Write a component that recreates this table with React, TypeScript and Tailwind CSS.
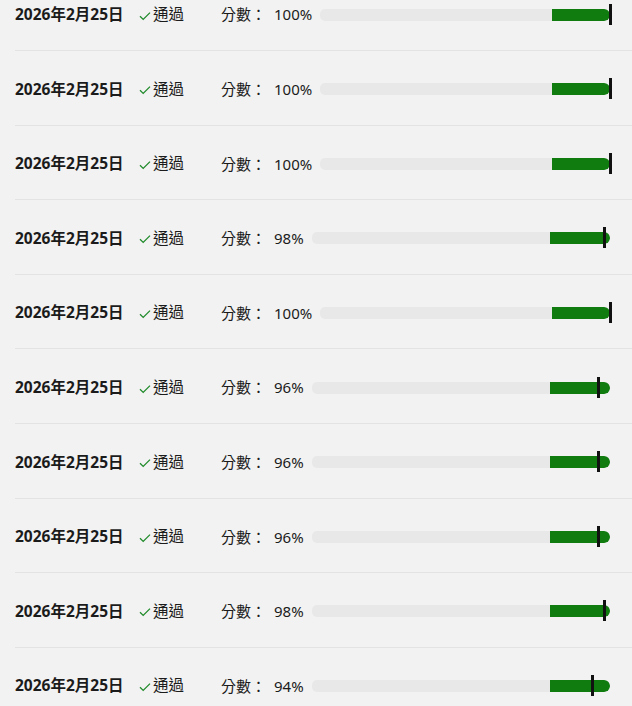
const results = [100, 100, 100, 98, 100, 96, 96, 96, 98, 94]

function CheckIcon() {
  return (
    <svg width="12" height="10" viewBox="0 0 12 10" fill="none" className="mr-[2px] mt-[2px]">
      <path d="M1 5.2 L4.2 8.4 L11 1.6" stroke="#1f8a2a" strokeWidth="1.3" />
    </svg>
  )
}

function ScoreBar({ score }: { score: number }) {
  return (
    <div className="relative ml-2 h-3 flex-1">
      <div className="absolute inset-0 overflow-hidden rounded-[5px] bg-[#e8e8e8]">
        <div className="absolute inset-y-0 left-[80%] right-0 rounded-r-[6px] bg-[#107c10]" />
      </div>
      <div
        className="absolute top-[-5px] h-[21px] w-[3px] bg-[#111]"
        style={{ left: `calc(${score}% - 1px)` }}
      />
    </div>
  )
}

function ResultRow({ score }: { score: number }) {
  return (
    <div className="flex h-[74.6px] items-center border-b border-[#e3e3e3] pr-[22px] pt-[3px]">
      <div className="w-[124px] text-[15.5px] font-bold">2026年2月25日</div>
      <div className="flex w-[82px] items-center text-[15.5px]">
        <CheckIcon />
        <span>通過</span>
      </div>
      <div className="text-[15px]">分數：</div>
      <div className="ml-[8px] text-[15px]">{score}%</div>
      <ScoreBar score={score} />
    </div>
  )
}

export default function App() {
  return (
    <div
      className="h-[706px] overflow-hidden bg-[#f2f2f2] text-[#1b1b1b]"
      style={{ fontFamily: '"Noto Sans", "Noto Sans CJK TC", sans-serif' }}
    >
      <div className="-mt-[23.6px] pl-[15px]">
        {results.map((score, i) => (
          <ResultRow key={i} score={score} />
        ))}
      </div>
    </div>
  )
}
